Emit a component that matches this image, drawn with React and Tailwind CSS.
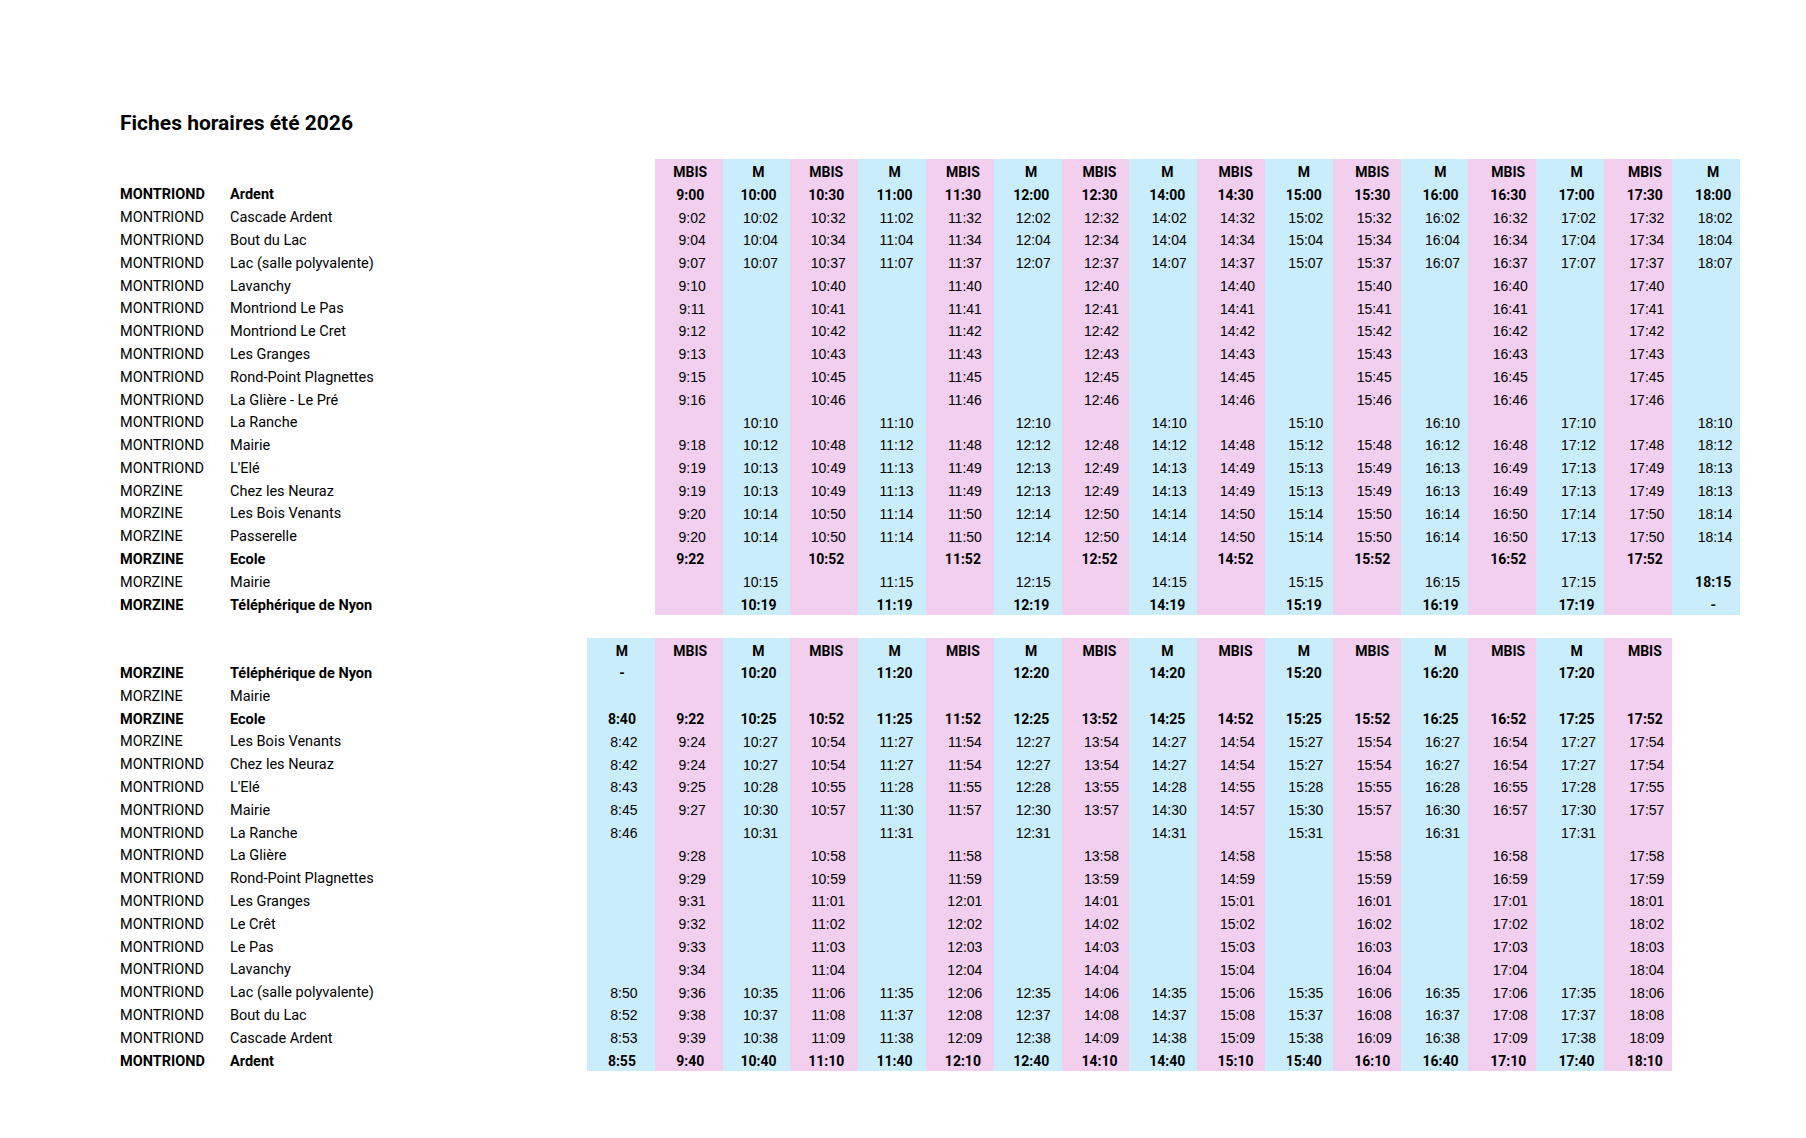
import React from 'react'

// Fiches horaires — two timetables laid out on a spreadsheet-like grid.
// Columns: city | stop | 17 time columns (table 1 uses 1..16, table 2 uses 0..15)

const PL = [
  'pl-[0px]', 'pl-[1px]', 'pl-[2px]', 'pl-[3px]', 'pl-[4px]', 'pl-[5px]', 'pl-[6px]', 'pl-[7px]',
  'pl-[8px]', 'pl-[9px]', 'pl-[10px]', 'pl-[11px]', 'pl-[12px]', 'pl-[13px]', 'pl-[14px]',
  'pl-[15px]', 'pl-[16px]', 'pl-[17px]', 'pl-[18px]', 'pl-[19px]', 'pl-[20px]',
]

const ALLER = [
  ['MONTRIOND', 'Ardent', true, '9:00 10:00 10:30 11:00 11:30 12:00 12:30 14:00 14:30 15:00 15:30 16:00 16:30 17:00 17:30 18:00'],
  ['MONTRIOND', 'Cascade Ardent', false, '9:02 10:02 10:32 11:02 11:32 12:02 12:32 14:02 14:32 15:02 15:32 16:02 16:32 17:02 17:32 18:02'],
  ['MONTRIOND', 'Bout du Lac', false, '9:04 10:04 10:34 11:04 11:34 12:04 12:34 14:04 14:34 15:04 15:34 16:04 16:34 17:04 17:34 18:04'],
  ['MONTRIOND', 'Lac (salle polyvalente)', false, '9:07 10:07 10:37 11:07 11:37 12:07 12:37 14:07 14:37 15:07 15:37 16:07 16:37 17:07 17:37 18:07'],
  ['MONTRIOND', 'Lavanchy', false, '9:10 . 10:40 . 11:40 . 12:40 . 14:40 . 15:40 . 16:40 . 17:40 .'],
  ['MONTRIOND', 'Montriond Le Pas', false, '9:11 . 10:41 . 11:41 . 12:41 . 14:41 . 15:41 . 16:41 . 17:41 .'],
  ['MONTRIOND', 'Montriond Le Cret', false, '9:12 . 10:42 . 11:42 . 12:42 . 14:42 . 15:42 . 16:42 . 17:42 .'],
  ['MONTRIOND', 'Les Granges', false, '9:13 . 10:43 . 11:43 . 12:43 . 14:43 . 15:43 . 16:43 . 17:43 .'],
  ['MONTRIOND', 'Rond-Point Plagnettes', false, '9:15 . 10:45 . 11:45 . 12:45 . 14:45 . 15:45 . 16:45 . 17:45 .'],
  ['MONTRIOND', 'La Glière - Le Pré', false, '9:16 . 10:46 . 11:46 . 12:46 . 14:46 . 15:46 . 16:46 . 17:46 .'],
  ['MONTRIOND', 'La Ranche', false, '. 10:10 . 11:10 . 12:10 . 14:10 . 15:10 . 16:10 . 17:10 . 18:10'],
  ['MONTRIOND', 'Mairie', false, '9:18 10:12 10:48 11:12 11:48 12:12 12:48 14:12 14:48 15:12 15:48 16:12 16:48 17:12 17:48 18:12'],
  ['MONTRIOND', "L'Elé", false, '9:19 10:13 10:49 11:13 11:49 12:13 12:49 14:13 14:49 15:13 15:49 16:13 16:49 17:13 17:49 18:13'],
  ['MORZINE', 'Chez les Neuraz', false, '9:19 10:13 10:49 11:13 11:49 12:13 12:49 14:13 14:49 15:13 15:49 16:13 16:49 17:13 17:49 18:13'],
  ['MORZINE', 'Les Bois Venants', false, '9:20 10:14 10:50 11:14 11:50 12:14 12:50 14:14 14:50 15:14 15:50 16:14 16:50 17:14 17:50 18:14'],
  ['MORZINE', 'Passerelle', false, '9:20 10:14 10:50 11:14 11:50 12:14 12:50 14:14 14:50 15:14 15:50 16:14 16:50 17:13 17:50 18:14'],
  ['MORZINE', 'Ecole', true, '9:22 . 10:52 . 11:52 . 12:52 . 14:52 . 15:52 . 16:52 . 17:52 .'],
  ['MORZINE', 'Mairie', false, '. 10:15 . 11:15 . 12:15 . 14:15 . 15:15 . 16:15 . 17:15 . *18:15'],
  ['MORZINE', 'Téléphérique de Nyon', true, '. 10:19 . 11:19 . 12:19 . 14:19 . 15:19 . 16:19 . 17:19 . -'],
]

const RETOUR = [
  ['MORZINE', 'Téléphérique de Nyon', true, '- . 10:20 . 11:20 . 12:20 . 14:20 . 15:20 . 16:20 . 17:20 .'],
  ['MORZINE', 'Mairie', false, '. . . . . . . . . . . . . . . .'],
  ['MORZINE', 'Ecole', true, '8:40 9:22 10:25 10:52 11:25 11:52 12:25 13:52 14:25 14:52 15:25 15:52 16:25 16:52 17:25 17:52'],
  ['MORZINE', 'Les Bois Venants', false, '8:42 9:24 10:27 10:54 11:27 11:54 12:27 13:54 14:27 14:54 15:27 15:54 16:27 16:54 17:27 17:54'],
  ['MONTRIOND', 'Chez les Neuraz', false, '8:42 9:24 10:27 10:54 11:27 11:54 12:27 13:54 14:27 14:54 15:27 15:54 16:27 16:54 17:27 17:54'],
  ['MONTRIOND', "L'Elé", false, '8:43 9:25 10:28 10:55 11:28 11:55 12:28 13:55 14:28 14:55 15:28 15:55 16:28 16:55 17:28 17:55'],
  ['MONTRIOND', 'Mairie', false, '8:45 9:27 10:30 10:57 11:30 11:57 12:30 13:57 14:30 14:57 15:30 15:57 16:30 16:57 17:30 17:57'],
  ['MONTRIOND', 'La Ranche', false, '8:46 . 10:31 . 11:31 . 12:31 . 14:31 . 15:31 . 16:31 . 17:31 .'],
  ['MONTRIOND', 'La Glière', false, '. 9:28 . 10:58 . 11:58 . 13:58 . 14:58 . 15:58 . 16:58 . 17:58'],
  ['MONTRIOND', 'Rond-Point Plagnettes', false, '. 9:29 . 10:59 . 11:59 . 13:59 . 14:59 . 15:59 . 16:59 . 17:59'],
  ['MONTRIOND', 'Les Granges', false, '. 9:31 . 11:01 . 12:01 . 14:01 . 15:01 . 16:01 . 17:01 . 18:01'],
  ['MONTRIOND', 'Le Crêt', false, '. 9:32 . 11:02 . 12:02 . 14:02 . 15:02 . 16:02 . 17:02 . 18:02'],
  ['MONTRIOND', 'Le Pas', false, '. 9:33 . 11:03 . 12:03 . 14:03 . 15:03 . 16:03 . 17:03 . 18:03'],
  ['MONTRIOND', 'Lavanchy', false, '. 9:34 . 11:04 . 12:04 . 14:04 . 15:04 . 16:04 . 17:04 . 18:04'],
  ['MONTRIOND', 'Lac (salle polyvalente)', false, '8:50 9:36 10:35 11:06 11:35 12:06 12:35 14:06 14:35 15:06 15:35 16:06 16:35 17:06 17:35 18:06'],
  ['MONTRIOND', 'Bout du Lac', false, '8:52 9:38 10:37 11:08 11:37 12:08 12:37 14:08 14:37 15:08 15:37 16:08 16:37 17:08 17:37 18:08'],
  ['MONTRIOND', 'Cascade Ardent', false, '8:53 9:39 10:38 11:09 11:38 12:09 12:38 14:09 14:38 15:09 15:38 16:09 16:38 17:09 17:38 18:09'],
  ['MONTRIOND', 'Ardent', true, '8:55 9:40 10:40 11:10 11:40 12:10 12:40 14:10 14:40 15:10 15:40 16:10 16:40 17:10 17:40 18:10'],
]

const Cell = ({ g, start, value, bold }) => {
  const inside = g >= start && g < start + 16
  const fill = !inside ? '' : g % 2 === 1 ? 'bg-[#f2ceef]' : 'bg-[#caedfb]'
  const shift = 0.4 * g + (bold ? 1 : 3)
  const pad = PL[Math.min(PL.length - 1, Math.round(shift * 2))]
  return (
    <div className={`w-[67.8px] shrink-0 h-full flex items-center justify-center pt-[4px] ${fill} ${pad}`}>
      {value ? (
        <span className={bold ? 'font-bold' : "font-normal font-['Liberation_Sans',_Arial,_sans-serif]"}>{value}</span>
      ) : null}
    </div>
  )
}

const Row = ({ city, stop, bold, times, start }) => {
  const values = times ? times.split(' ') : []
  return (
    <div className="flex h-[22.8px] text-[14px] text-black">
      <div className={`w-[110px] shrink-0 flex items-center pt-[4px] text-[14.5px] ${bold ? 'font-bold' : ''}`}>
        {city}
      </div>
      <div className={`w-[357px] shrink-0 flex items-center pt-[4px] text-[14.5px] ${bold ? 'font-bold' : ''}`}>
        {stop}
      </div>
      {Array.from({ length: 17 }).map((_, g) => {
        const i = g - start
        let v = i >= 0 && i < values.length ? values[i] : ''
        if (v === '.') v = ''
        let b = bold
        if (v.startsWith('*')) {
          v = v.slice(1)
          b = true
        }
        return <Cell key={g} g={g} start={start} value={v} bold={b} />
      })}
    </div>
  )
}

const HeaderRow = ({ start }) => (
  <div className="flex h-[22.8px] text-[14px] font-bold text-black">
    <div className="w-[467px] shrink-0" />
    {Array.from({ length: 17 }).map((_, g) => {
      const inside = g >= start && g < start + 16
      return <Cell key={g} g={g} start={start} value={inside ? (g % 2 === 1 ? 'MBIS' : 'M') : ''} bold />
    })}
  </div>
)

const Timetable = ({ rows, start }) => (
  <div className="flex flex-col">
    <HeaderRow start={start} />
    {rows.map(([city, stop, bold, times], idx) => (
      <Row key={idx} city={city} stop={stop} bold={bold} times={times} start={start} />
    ))}
  </div>
)

export default function App() {
  return (
    <div className="w-[1806px] h-[1138px] bg-white overflow-hidden font-['Roboto',_'Liberation_Sans',_sans-serif]">
      <div className="pl-[120px] pt-[110px]">
        <h1 className="h-[26px] leading-[26px] text-[21px] font-bold text-black">
          Fiches horaires été 2026
        </h1>
        <div className="mt-[23px]">
          <Timetable rows={ALLER} start={1} />
        </div>
        <div className="mt-[22.8px]">
          <Timetable rows={RETOUR} start={0} />
        </div>
      </div>
    </div>
  )
}
